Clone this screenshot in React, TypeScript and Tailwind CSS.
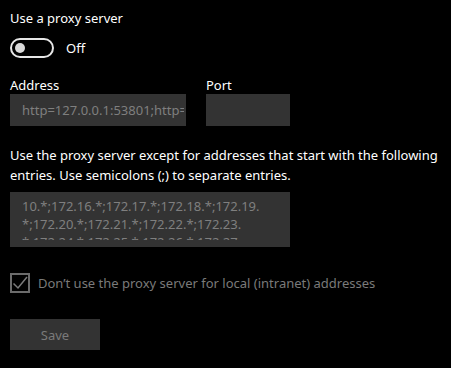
import React from 'react';

const font = { fontFamily: '"Segoe UI", "Noto Sans", "Open Sans", sans-serif' };

export default function App() {
  return (
    <div className="w-[451px] h-[368px] bg-black text-white pl-[10px] pt-[8px] text-[13px] leading-[20px]" style={font}>
      <div>Use a proxy server</div>

      <div className="flex items-center gap-3 mt-[10px]">
        <div className="w-[44px] h-[20px] rounded-full border-2 border-[#e6e6e6] flex items-center pl-[3px]">
          <div className="w-[10px] h-[10px] rounded-full bg-[#d9d9d9]" />
        </div>
        <span>Off</span>
      </div>

      <div className="flex gap-5 mt-[20px]">
        <div className="flex flex-col">
          <span className="h-[15px] leading-[15px]">Address</span>
          <div className="mt-[1px] w-[176px] h-[32px] bg-[#333333] text-[#7f7f7f] pl-[12px] pr-[2px] flex items-center">
            <div className="overflow-hidden whitespace-nowrap">http=127.0.0.1:53801;http=127.0.0.1</div>
          </div>
        </div>
        <div className="flex flex-col">
          <span className="h-[15px] leading-[15px]">Port</span>
          <div className="mt-[1px] w-[84px] h-[32px] bg-[#333333]" />
        </div>
      </div>

      <p className="mt-[19px] pr-[8px]">
        Use the proxy server except for addresses that start with the following entries. Use semicolons (;) to separate entries.
      </p>

      <div className="mt-[7px] w-[280px] h-[55px] bg-[#333333] text-[#7f7f7f] pl-[12px] pr-[6px] pt-[5px]">
        <div className="h-[43px] overflow-hidden leading-[18px]">
          10.*;172.16.*;172.17.*;172.18.*;172.19.
          <br />
          *;172.20.*;172.21.*;172.22.*;172.23.
          <br />
          *;172.24.*;172.25.*;172.26.*;172.27.
        </div>
      </div>

      <div className="flex items-center gap-2 mt-[26px] text-[#7a7a7a]">
        <div className="w-[20px] h-[20px] border-2 border-[#6b6b6b] flex items-center justify-center">
          <svg width="16" height="16" viewBox="0 0 16 16" fill="none">
            <path d="M1.5 8.5 L6 13 L15 2" stroke="#7a7a7a" strokeWidth="1.5" />
          </svg>
        </div>
        <span>Don’t use the proxy server for local (intranet) addresses</span>
      </div>

      <button className="mt-[26px] w-[90px] h-[31px] bg-[#333333] text-[#7a7a7a]">Save</button>
    </div>
  );
}
